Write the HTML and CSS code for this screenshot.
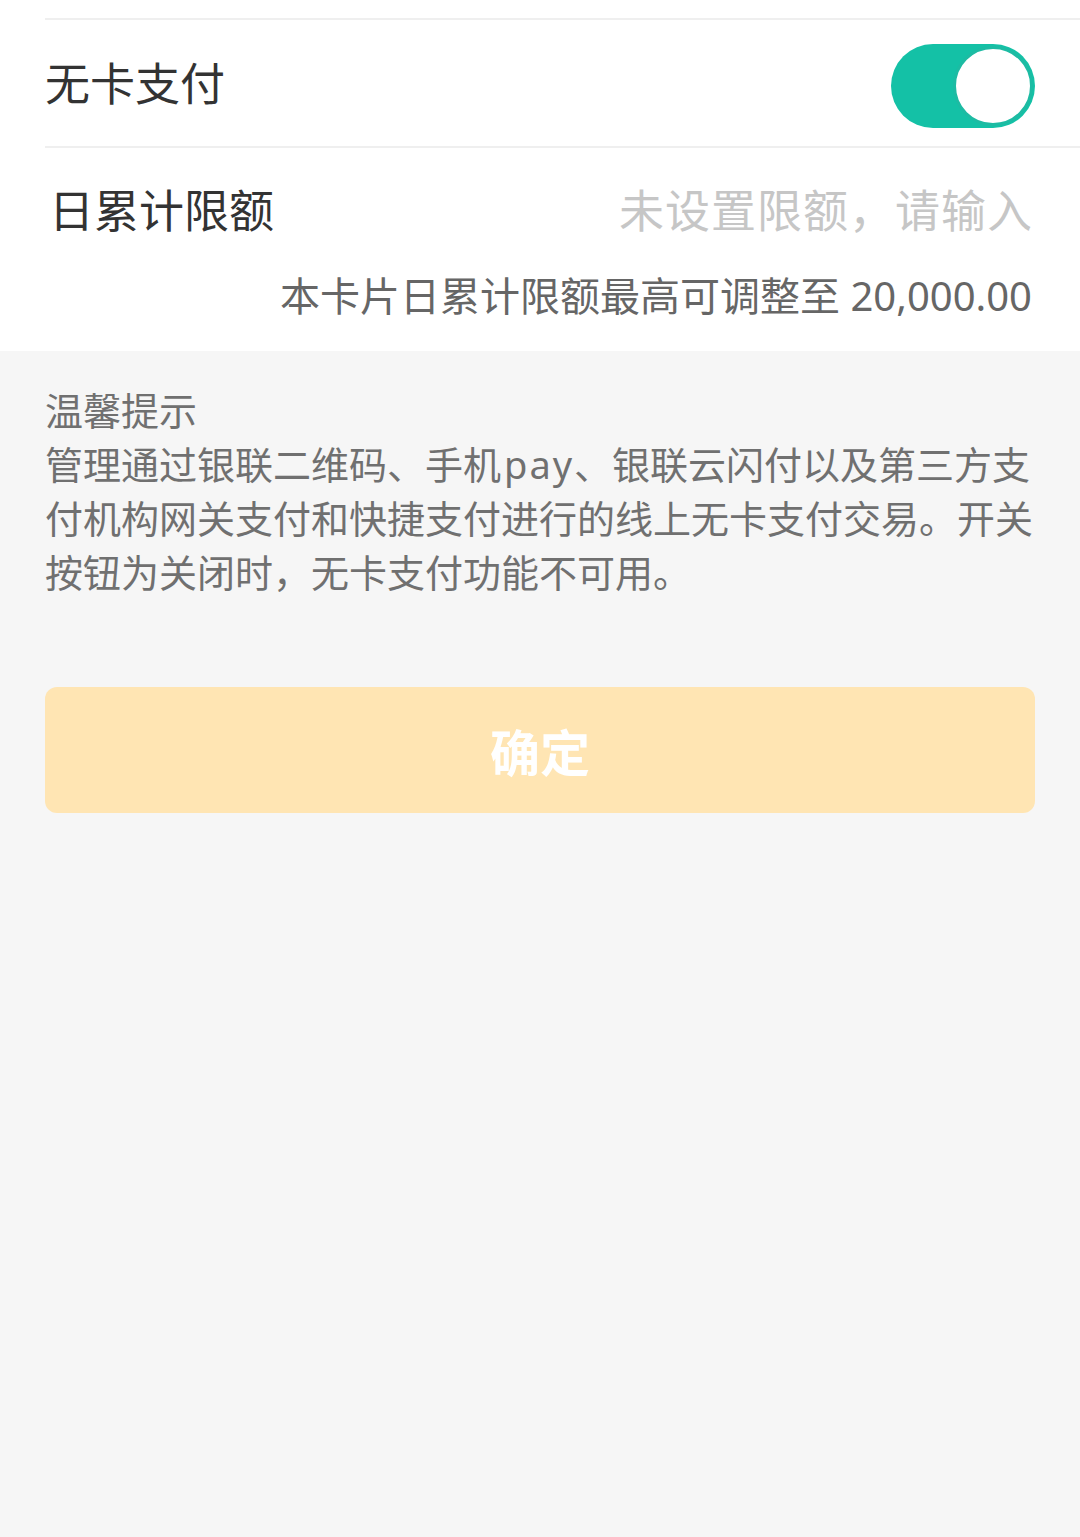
FILE: index.html
```html
<!DOCTYPE html>
<html lang="zh-CN">
<head>
<meta charset="utf-8">
<title>无卡支付</title>
<link rel="stylesheet" href="styles.css">
</head>
<body>
<div class="page">
  <section class="card">
    <div class="top-gap"></div>
    <div class="row row-switch">
      <span class="label">无卡支付</span>
      <div class="switch on"><div class="knob"></div></div>
    </div>
    <div class="row row-limit">
      <span class="label">日累计限额</span>
      <span class="placeholder">未设置限额，请输入</span>
    </div>
    <div class="limit-note">本卡片日累计限额最高可调整至 20,000.00</div>
  </section>
  <section class="tips">
    <div class="tips-title">温馨提示</div>
    <p class="tips-text">管理通过银联二维码、手机<span class="latin">pay</span>、银联云闪付以及第三方支付机构网关支付和快捷支付进行的线上无卡支付交易。开关按钮为关闭时，无卡支付功能不可用。</p>
  </section>
  <div class="actions">
    <button class="btn-confirm" type="button">确定</button>
  </div>
</div>
</body>
</html>
```

FILE: styles.css
```css
html, body {
  margin: 0;
  padding: 0;
}
body {
  background: #f6f6f6;
  font-family: "Noto Sans", "Noto Sans CJK SC", sans-serif;
  width: 1080px;
  min-height: 1537px;
}
.page {
  display: flex;
  flex-direction: column;
}
.card {
  background: #ffffff;
  padding-left: 45px;
}
.top-gap {
  height: 18px;
  border-bottom: 2px solid #efefef;
}
.row {
  display: flex;
  align-items: center;
  justify-content: space-between;
  padding-right: 45px;
}
.row-switch {
  height: 126px;
  border-bottom: 2px solid #efefef;
}
.row-limit {
  height: 124px;
}
.label {
  font-size: 45px;
  color: #333333;
  line-height: 1;
}
.row-limit .label {
  padding-left: 4px;
}
.placeholder {
  font-size: 45px;
  letter-spacing: 1px;
  color: #c6c6c6;
  line-height: 1;
  padding-right: 2px;
}
.switch {
  width: 144px;
  height: 84px;
  margin-top: 6px;
  padding: 2px;
  border-radius: 42px;
  background: #14c1a6;
  display: flex;
  justify-content: flex-end;
  align-items: center;
  box-sizing: border-box;
}
.knob {
  width: 80px;
  height: 80px;
  border-radius: 50%;
  background: #ffffff;
  border: 3px solid #1dbba3;
  box-sizing: border-box;
}
.limit-note {
  text-align: right;
  font-size: 40px;
  line-height: 48px;
  color: #666666;
  padding-right: 48px;
  padding-bottom: 31px;
}
.tips {
  padding: 32px 43px 0 45px;
  color: #707070;
  font-size: 38px;
  line-height: 54px;
}
.tips-title {
  line-height: 54px;
}
.tips-text {
  margin: 0;
}
.latin {
  letter-spacing: 2px;
  padding-left: 3px;
}
.actions {
  padding: 88px 45px 0 45px;
}
.btn-confirm {
  display: block;
  width: 100%;
  height: 126px;
  border: none;
  border-radius: 12px;
  background: #ffe5b3;
  color: #ffffff;
  font-family: "Noto Sans", "Noto Sans CJK SC", sans-serif;
  font-size: 50px;
  font-weight: 700;
  padding: 0;
}
```
